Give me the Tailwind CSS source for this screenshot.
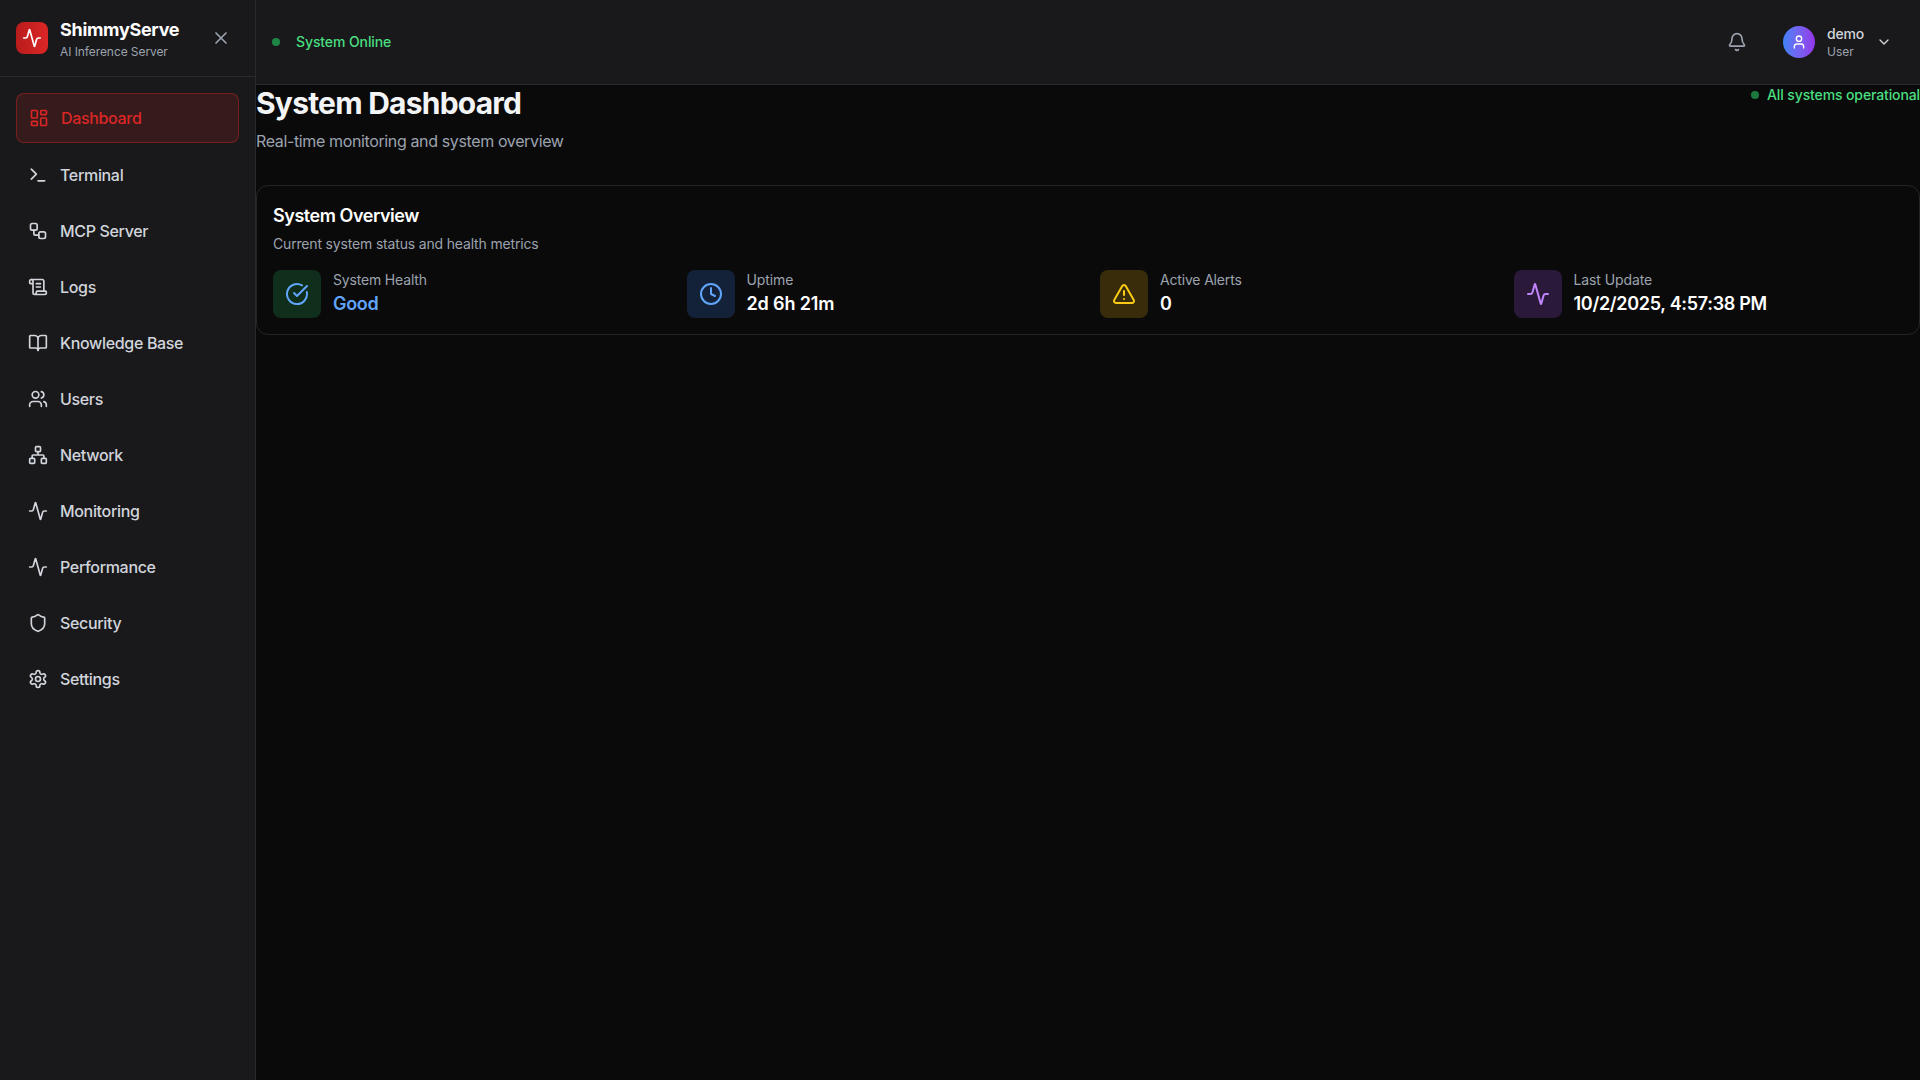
<!DOCTYPE html>
<html lang="en">
<head>
<meta charset="utf-8">
<title>ShimmyServe</title>
<script src="https://cdn.jsdelivr.net/npm/@tailwindcss/browser@4"></script>
</head>
<body class="flex h-screen overflow-hidden bg-[#0a0a0a] font-['Inter',sans-serif] text-white antialiased">
<svg class="hidden">
  <symbol id="activity" viewBox="0 0 24 24"><path d="M22 12h-2.48a2 2 0 0 0-1.93 1.46l-2.35 8.36a.25.25 0 0 1-.48 0L9.24 2.18a.25.25 0 0 0-.48 0l-2.35 8.36A2 2 0 0 1 4.49 12H2"/></symbol>
</svg>

<aside class="flex w-64 shrink-0 flex-col border-r border-[#2a2a2d] bg-[#19191b]">
  <div class="flex items-center justify-between border-b border-[#2a2a2d] p-4">
    <div class="flex items-center gap-3">
      <div class="flex size-8 items-center justify-center rounded-lg bg-linear-to-r from-[#b91c1c] to-[#dc2626]">
        <svg class="size-5 fill-none stroke-white stroke-2" stroke-linecap="round" stroke-linejoin="round"><use href="#activity"/></svg>
      </div>
      <div>
        <h2 class="text-lg/7 font-bold tracking-[-0.3px]">ShimmyServe</h2>
        <p class="text-xs tracking-[-0.08px] text-[#9ca3af]">AI Inference Server</p>
      </div>
    </div>
    <button class="p-2 text-[#9ca3af]">
      <svg class="size-5 fill-none stroke-current stroke-2" viewBox="0 0 24 24" stroke-linecap="round" stroke-linejoin="round"><path d="M18 6 6 18M6 6l12 12"/></svg>
    </button>
  </div>
  <nav class="flex flex-col gap-2 p-4 font-medium tracking-[-0.33px] text-[#d1d5db] [&_svg]:size-5 [&_svg]:fill-none [&_svg]:stroke-current [&_svg]:stroke-2">
    <a class="flex items-center gap-3 rounded-lg border border-[#dc2626]/40 bg-[#dc2626]/15 p-3 text-[#dc2626]">
      <svg viewBox="0 0 24 24" stroke-linecap="round" stroke-linejoin="round"><rect width="7" height="9" x="3" y="3" rx="1"/><rect width="7" height="5" x="14" y="3" rx="1"/><rect width="7" height="9" x="14" y="12" rx="1"/><rect width="7" height="5" x="3" y="16" rx="1"/></svg>
      <span>Dashboard</span>
    </a>
    <a class="flex items-center gap-3 p-3">
      <svg viewBox="0 0 24 24" stroke-linecap="round" stroke-linejoin="round"><path d="m4 17 6-6-6-6M12 19h8"/></svg>
      <span>Terminal</span>
    </a>
    <a class="flex items-center gap-3 p-3">
      <svg viewBox="0 0 24 24" stroke-linecap="round" stroke-linejoin="round"><rect width="8" height="8" x="3" y="3" rx="2"/><path d="M7 11v4a2 2 0 0 0 2 2h4"/><rect width="8" height="8" x="13" y="13" rx="2"/></svg>
      <span>MCP Server</span>
    </a>
    <a class="flex items-center gap-3 p-3">
      <svg viewBox="0 0 24 24" stroke-linecap="round" stroke-linejoin="round"><path d="M15 12h-5M15 8h-5M19 17V5a2 2 0 0 0-2-2H4"/><path d="M8 21h12a2 2 0 0 0 2-2v-1a1 1 0 0 0-1-1H11a1 1 0 0 0-1 1v1a2 2 0 1 1-4 0V5a2 2 0 1 0-4 0v2a1 1 0 0 0 1 1h3"/></svg>
      <span>Logs</span>
    </a>
    <a class="flex items-center gap-3 p-3">
      <svg viewBox="0 0 24 24" stroke-linecap="round" stroke-linejoin="round"><path d="M12 7v14"/><path d="M3 18a1 1 0 0 1-1-1V4a1 1 0 0 1 1-1h5a4 4 0 0 1 4 4 4 4 0 0 1 4-4h5a1 1 0 0 1 1 1v13a1 1 0 0 1-1 1h-6a3 3 0 0 0-3 3 3 3 0 0 0-3-3z"/></svg>
      <span>Knowledge Base</span>
    </a>
    <a class="flex items-center gap-3 p-3">
      <svg viewBox="0 0 24 24" stroke-linecap="round" stroke-linejoin="round"><path d="M16 21v-2a4 4 0 0 0-4-4H6a4 4 0 0 0-4 4v2"/><circle cx="9" cy="7" r="4"/><path d="M22 21v-2a4 4 0 0 0-3-3.87M16 3.13a4 4 0 0 1 0 7.75"/></svg>
      <span>Users</span>
    </a>
    <a class="flex items-center gap-3 p-3">
      <svg viewBox="0 0 24 24" stroke-linecap="round" stroke-linejoin="round"><rect x="16" y="16" width="6" height="6" rx="1"/><rect x="2" y="16" width="6" height="6" rx="1"/><rect x="9" y="2" width="6" height="6" rx="1"/><path d="M5 16v-3a1 1 0 0 1 1-1h12a1 1 0 0 1 1 1v3M12 12V8"/></svg>
      <span>Network</span>
    </a>
    <a class="flex items-center gap-3 p-3">
      <svg stroke-linecap="round" stroke-linejoin="round"><use href="#activity"/></svg>
      <span>Monitoring</span>
    </a>
    <a class="flex items-center gap-3 p-3">
      <svg stroke-linecap="round" stroke-linejoin="round"><use href="#activity"/></svg>
      <span>Performance</span>
    </a>
    <a class="flex items-center gap-3 p-3">
      <svg viewBox="0 0 24 24" stroke-linecap="round" stroke-linejoin="round"><path d="M20 13c0 5-3.5 7.5-7.66 8.95a1 1 0 0 1-.67-.01C7.5 20.5 4 18 4 13V6a1 1 0 0 1 1-1c2 0 4.5-1.2 6.24-2.72a1.17 1.17 0 0 1 1.52 0C14.51 3.81 17 5 19 5a1 1 0 0 1 1 1z"/></svg>
      <span>Security</span>
    </a>
    <a class="flex items-center gap-3 p-3">
      <svg viewBox="0 0 24 24" stroke-linecap="round" stroke-linejoin="round"><path d="M12.22 2h-.44a2 2 0 0 0-2 2v.18a2 2 0 0 1-1 1.73l-.43.25a2 2 0 0 1-2 0l-.15-.08a2 2 0 0 0-2.73.73l-.22.38a2 2 0 0 0 .73 2.73l.15.1a2 2 0 0 1 1 1.72v.51a2 2 0 0 1-1 1.74l-.15.09a2 2 0 0 0-.73 2.73l.22.38a2 2 0 0 0 2.73.73l.15-.08a2 2 0 0 1 2 0l.43.25a2 2 0 0 1 1 1.73V20a2 2 0 0 0 2 2h.44a2 2 0 0 0 2-2v-.18a2 2 0 0 1 1-1.73l.43-.25a2 2 0 0 1 2 0l.15.08a2 2 0 0 0 2.73-.73l.22-.39a2 2 0 0 0-.73-2.73l-.15-.08a2 2 0 0 1-1-1.74v-.5a2 2 0 0 1 1-1.74l.15-.09a2 2 0 0 0 .73-2.73l-.22-.38a2 2 0 0 0-2.73-.73l-.15.08a2 2 0 0 1-2 0l-.43-.25a2 2 0 0 1-1-1.73V4a2 2 0 0 0-2-2z"/><circle cx="12" cy="12" r="3"/></svg>
      <span>Settings</span>
    </a>
  </nav>
</aside>

<div class="flex min-w-0 flex-1 flex-col">
  <header class="flex items-center justify-between border-b border-[#2a2a2d] bg-[#19191b] p-4">
    <div class="flex items-center gap-4">
      <span class="size-2 rounded-full bg-[#1f8544]"></span>
      <span class="text-sm font-medium tracking-[-0.1px] text-[#4ade80]">System Online</span>
    </div>
    <div class="flex items-center gap-4">
      <button class="p-2 text-[#9ca3af]">
        <svg class="size-5 fill-none stroke-current stroke-2" viewBox="0 0 24 24" stroke-linecap="round" stroke-linejoin="round"><path d="M10.268 21a2 2 0 0 0 3.464 0"/><path d="M3.262 15.326A1 1 0 0 0 4 17h16a1 1 0 0 0 .74-1.673C19.41 13.956 18 12.499 18 8A6 6 0 0 0 6 8c0 4.499-1.411 5.956-2.738 7.326"/></svg>
      </button>
      <button class="flex items-center gap-3 px-3 py-2 text-left text-[#d1d5db]">
        <span class="flex size-8 items-center justify-center rounded-full bg-linear-to-r from-[#3b82f6] to-[#9333ea]">
          <svg class="size-4 fill-none stroke-white stroke-2" viewBox="0 0 24 24" stroke-linecap="round" stroke-linejoin="round"><path d="M19 21v-2a4 4 0 0 0-4-4H9a4 4 0 0 0-4 4v2"/><circle cx="12" cy="7" r="4"/></svg>
        </span>
        <span class="block">
          <span class="block text-sm font-medium tracking-[-0.2px]">demo</span>
          <span class="block text-xs text-[#9ca3af]">User</span>
        </span>
        <svg class="size-4 fill-none stroke-current stroke-2" viewBox="0 0 24 24" stroke-linecap="round" stroke-linejoin="round"><path d="m6 9 6 6 6-6"/></svg>
      </button>
    </div>
  </header>

  <main class="flex flex-col gap-8">
    <div class="flex items-start justify-between">
      <div>
        <h1 class="text-3xl/9 font-bold tracking-[-0.77px] text-[#f3f4f6]">System Dashboard</h1>
        <p class="mt-2 tracking-[-0.37px] text-[#9ca3af]">Real-time monitoring and system overview</p>
      </div>
      <div class="flex items-center gap-2">
        <span class="size-2 rounded-full bg-[#1c7a3e]"></span>
        <span class="text-sm font-medium tracking-[-0.12px] text-[#4ade80]">All systems operational</span>
      </div>
    </div>

    <section class="rounded-xl border border-[#262626] p-4">
      <h3 class="text-lg/7 font-semibold tracking-[-0.45px]">System Overview</h3>
      <p class="mt-1 text-sm tracking-[-0.17px] text-[#9ca3af]">Current system status and health metrics</p>
      <div class="mt-4 grid grid-cols-4 gap-6 [&_svg]:size-6 [&_svg]:fill-none [&_svg]:stroke-current [&_svg]:stroke-2">
        <div class="flex items-center gap-3">
          <div class="flex size-12 items-center justify-center rounded-lg bg-[#0f2e1b] text-[#60a5fa]">
            <svg viewBox="0 0 24 24" stroke-linecap="round" stroke-linejoin="round"><path d="M21.801 10A10 10 0 1 1 17 3.335"/><path d="m9 11 3 3L22 4"/></svg>
          </div>
          <div>
            <p class="text-sm tracking-[-0.17px] text-[#9ca3af]">System Health</p>
            <p class="text-lg/7 font-semibold tracking-[-0.3px] text-[#60a5fa]">Good</p>
          </div>
        </div>
        <div class="flex items-center gap-3">
          <div class="flex size-12 items-center justify-center rounded-lg bg-[#142239] text-[#60a5fa]">
            <svg viewBox="0 0 24 24" stroke-linecap="round" stroke-linejoin="round"><circle cx="12" cy="12" r="10"/><path d="M12 6v6l4 2"/></svg>
          </div>
          <div>
            <p class="text-sm tracking-[-0.1px] text-[#9ca3af]">Uptime</p>
            <p class="text-lg/7 font-semibold tracking-[-0.13px]">2d 6h 21m</p>
          </div>
        </div>
        <div class="flex items-center gap-3">
          <div class="flex size-12 items-center justify-center rounded-lg bg-[#382c0a] text-[#facc15]">
            <svg viewBox="0 0 24 24" stroke-linecap="round" stroke-linejoin="round"><path d="m21.73 18-8-14a2 2 0 0 0-3.48 0l-8 14A2 2 0 0 0 4 21h16a2 2 0 0 0 1.73-3M12 9v4M12 17h.01"/></svg>
          </div>
          <div>
            <p class="text-sm tracking-[-0.17px] text-[#9ca3af]">Active Alerts</p>
            <p class="text-lg/7 font-semibold">0</p>
          </div>
        </div>
        <div class="flex items-center gap-3">
          <div class="flex size-12 items-center justify-center rounded-lg bg-[#2a1939] text-[#c084fc]">
            <svg stroke-linecap="round" stroke-linejoin="round"><use href="#activity"/></svg>
          </div>
          <div>
            <p class="text-sm tracking-[-0.1px] text-[#9ca3af]">Last Update</p>
            <p class="text-lg/7 font-semibold tracking-[-0.3px]">10/2/2025, 4:57:38 PM</p>
          </div>
        </div>
      </div>
    </section>
  </main>
</div>
</body>
</html>
